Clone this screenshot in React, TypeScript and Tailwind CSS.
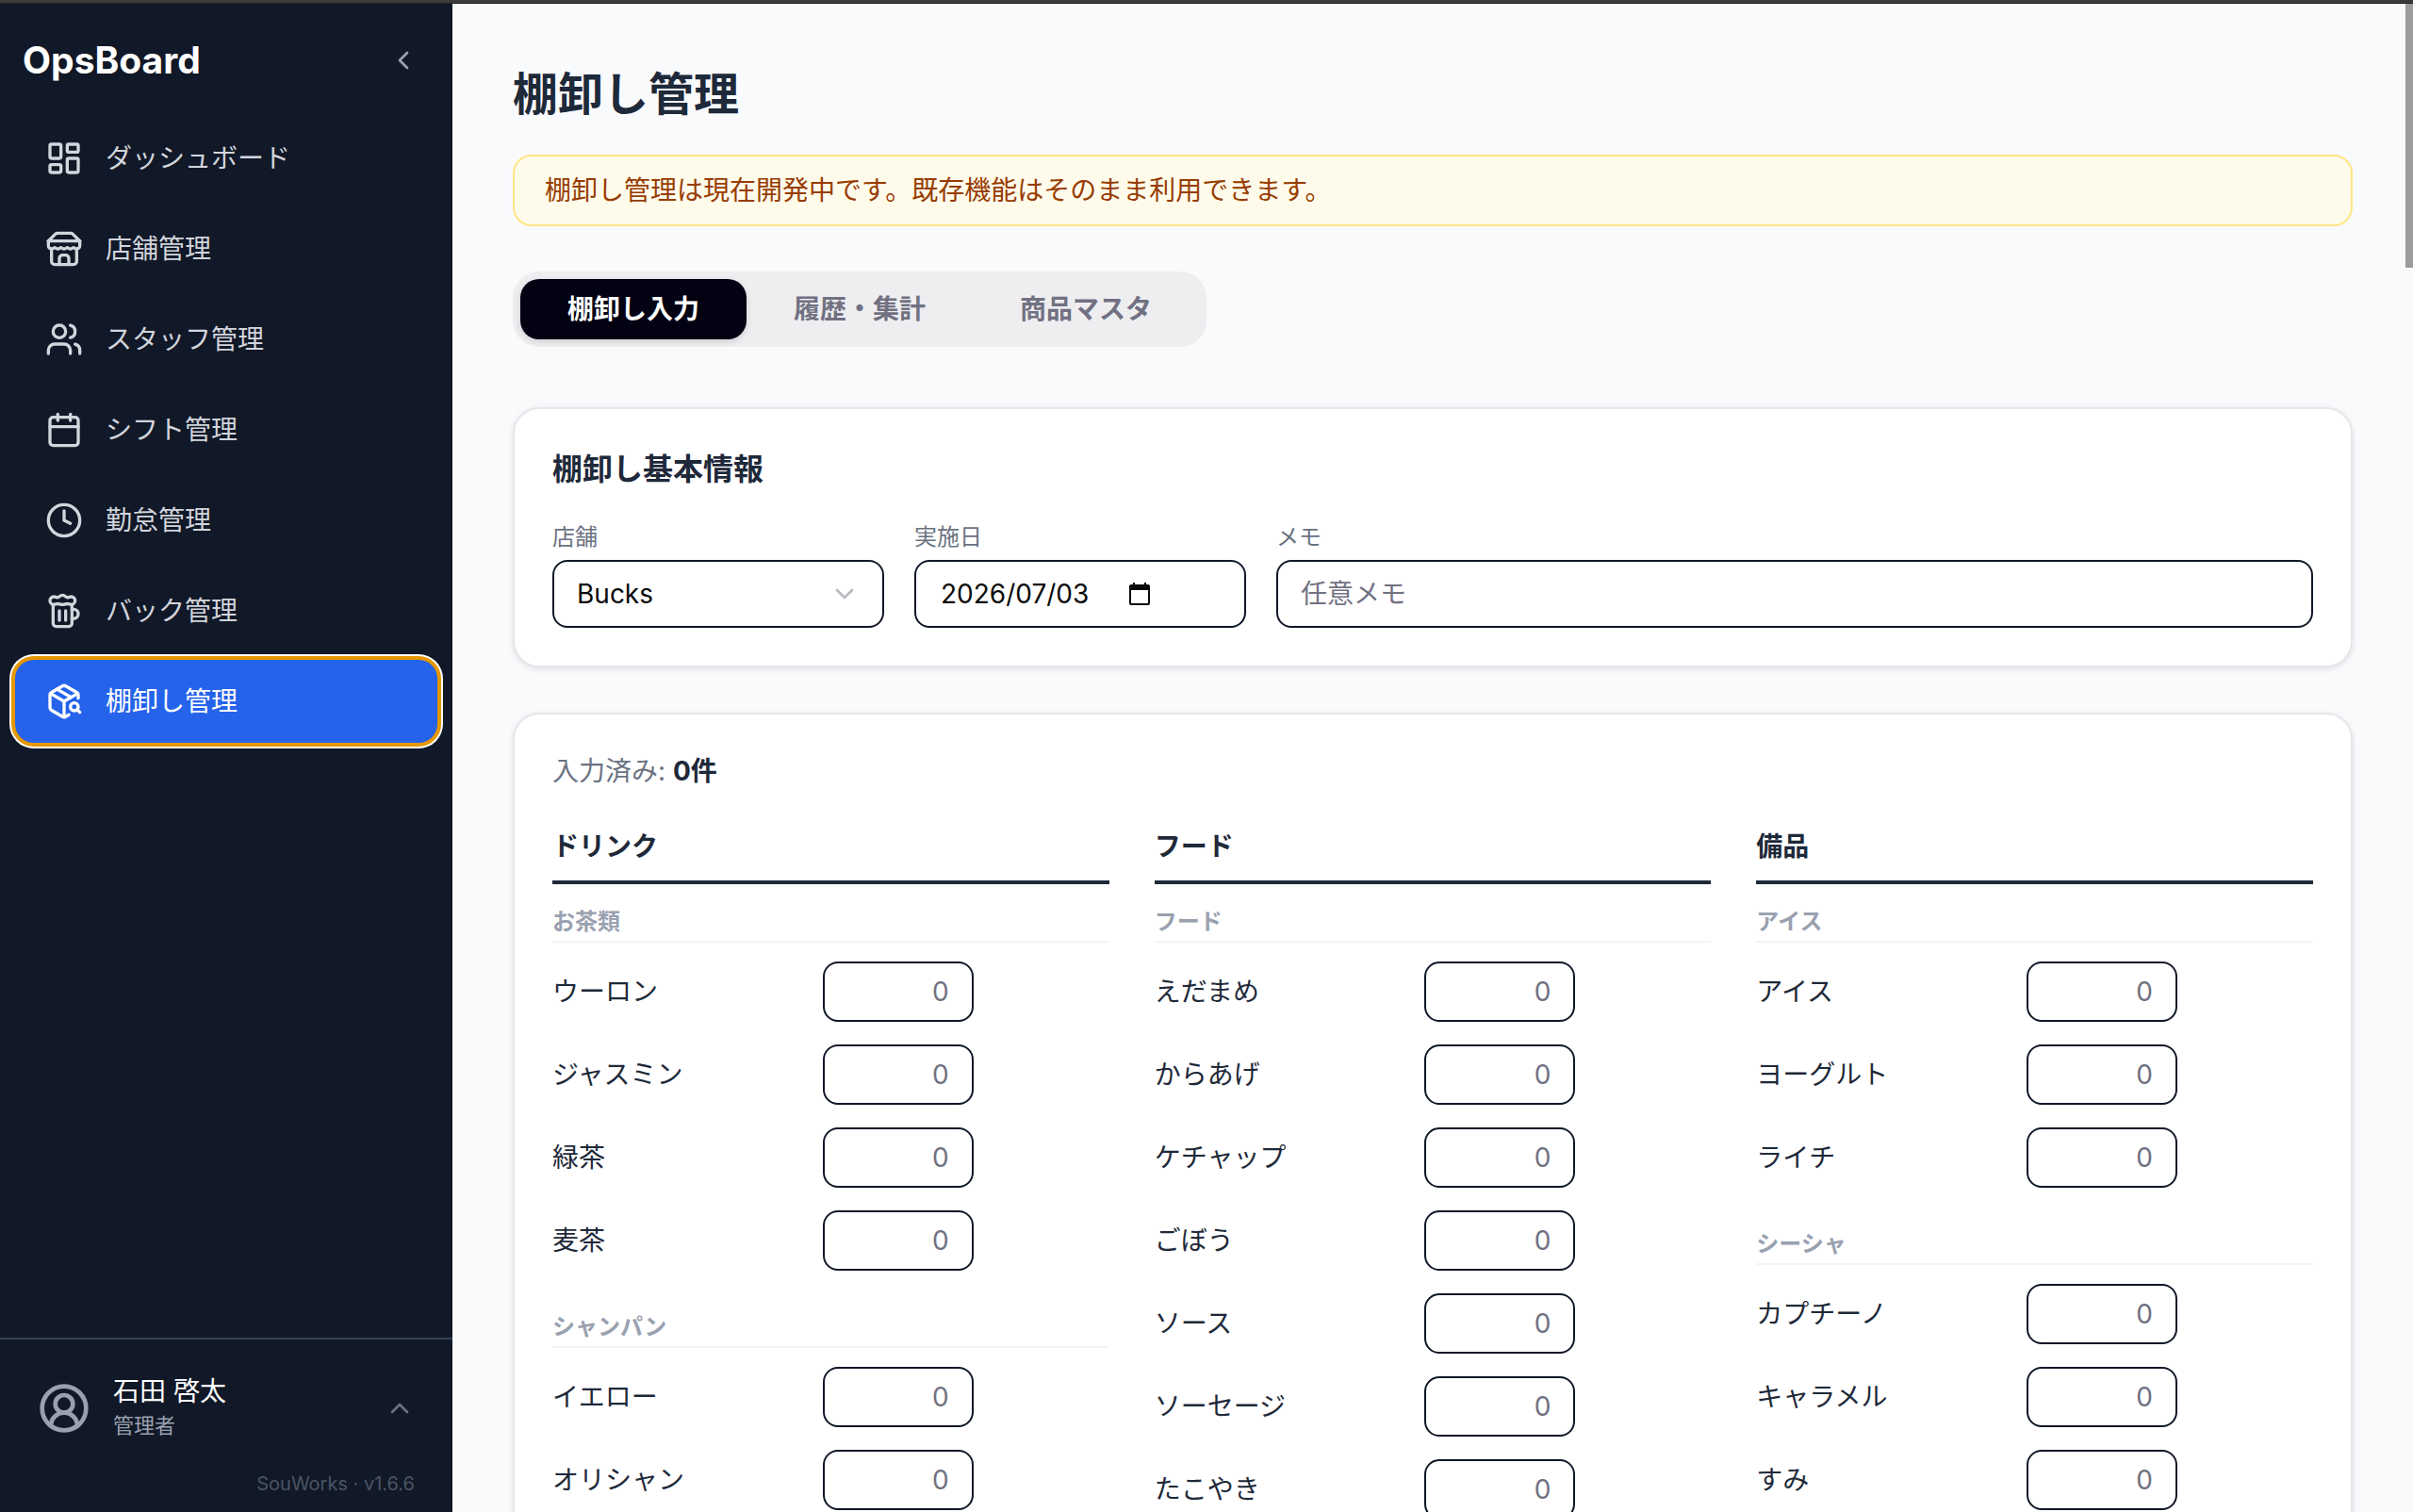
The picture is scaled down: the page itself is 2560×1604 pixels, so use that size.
import { useState } from 'react'
import {
  Beer, Calendar, ChevronDown, ChevronLeft, ChevronUp,
  CircleUserRound, Clock, LayoutDashboard, PackageSearch, Users,
} from 'lucide-react'

type Category = { name: string; items: string[] }
type Group = { name: string; categories: Category[] }

const GROUPS: Group[] = [
  {
    name: 'ドリンク',
    categories: [
      { name: 'お茶類', items: ['ウーロン', 'ジャスミン', '緑茶', '麦茶'] },
      { name: 'シャンパン', items: ['イエロー', 'オリシャン'] },
    ],
  },
  {
    name: 'フード',
    categories: [
      { name: 'フード', items: ['えだまめ', 'からあげ', 'ケチャップ', 'ごぼう', 'ソース', 'ソーセージ', 'たこやき'] },
    ],
  },
  {
    name: '備品',
    categories: [
      { name: 'アイス', items: ['アイス', 'ヨーグルト', 'ライチ'] },
      { name: 'シーシャ', items: ['カプチーノ', 'キャラメル', 'すみ'] },
    ],
  },
]

const TABS = ['棚卸し入力', '履歴・集計', '商品マスタ']

const FIELD = 'h-18 w-full rounded-2xl border-2 border-[#101828] bg-white text-[28px] leading-10 text-[#0a0a0a]'

function StoreIcon({ className }: { className?: string }) {
  return (
    <svg
      viewBox="0 0 24 24"
      className={className}
      fill="none"
      stroke="currentColor"
      strokeWidth="2"
      strokeLinecap="round"
      strokeLinejoin="round"
      aria-hidden="true"
    >
      <path d="m2 7 4.41-4.41A2 2 0 0 1 7.83 2h8.34a2 2 0 0 1 1.42.59L22 7" />
      <path d="M4 12v8a2 2 0 0 0 2 2h12a2 2 0 0 0 2-2v-8" />
      <path d="M15 22v-4a2 2 0 0 0-2-2h-2a2 2 0 0 0-2 2v4" />
      <path d="M2 7h20" />
      <path d="M22 7v3a2 2 0 0 1-2 2a2.7 2.7 0 0 1-1.59-.63.7.7 0 0 0-.82 0A2.7 2.7 0 0 1 16 12a2.7 2.7 0 0 1-1.59-.63.7.7 0 0 0-.82 0A2.7 2.7 0 0 1 12 12a2.7 2.7 0 0 1-1.59-.63.7.7 0 0 0-.82 0A2.7 2.7 0 0 1 8 12a2.7 2.7 0 0 1-1.59-.63.7.7 0 0 0-.82 0A2.7 2.7 0 0 1 4 12a2 2 0 0 1-2-2V7" />
    </svg>
  )
}

const NAV = [
  { label: 'ダッシュボード', icon: LayoutDashboard },
  { label: '店舗管理', icon: StoreIcon },
  { label: 'スタッフ管理', icon: Users },
  { label: 'シフト管理', icon: Calendar },
  { label: '勤怠管理', icon: Clock },
  { label: 'バック管理', icon: Beer },
  { label: '棚卸し管理', icon: PackageSearch },
]

function Sidebar() {
  const current = '棚卸し管理'

  return (
    <aside className="flex w-120 shrink-0 flex-col bg-[#111827]">
      <div className="flex h-30 items-center justify-between pl-6 pr-9">
        <span className="text-[39px] font-bold leading-14 text-white">OpsBoard</span>
        <button type="button" aria-label="メニューを閉じる" className="text-[#99a1af]">
          <ChevronLeft className="size-8" />
        </button>
      </div>

      <nav className="flex flex-1 flex-col gap-2 px-4">
        {NAV.map(({ label, icon: Icon }) => (
          <a
            key={label}
            href="#"
            aria-current={label === current ? 'page' : undefined}
            className={
              'flex h-22 items-center gap-6 rounded-[20px] px-8 text-[28px] leading-10 ' +
              (label === current
                ? 'bg-[#2563eb] text-white shadow-[0_0_0_4px_#e59700,0_0_0_6px_#ffffff]'
                : 'text-[#d1d5dc]')
            }
          >
            <Icon className="size-10 shrink-0" />
            <span>{label}</span>
          </a>
        ))}
      </nav>

      <div className="border-t-2 border-[#364153] px-10 pb-[14px] pt-[35px]">
        <button type="button" className="flex w-full items-center gap-6 text-left">
          <CircleUserRound className="size-14 shrink-0 text-[#99a1af]" />
          <span className="flex flex-1 flex-col pb-1">
            <span className="text-[28px] leading-10 text-white">石田 啓太</span>
            <span className="text-[22px] leading-8 text-[#99a1af]">管理者</span>
          </span>
          <ChevronUp className="size-8 text-[#6a7282]" />
        </button>
        <p className="mt-[26px] text-right text-[20px] leading-8 text-[#4a5565]">SouWorks · v1.6.6</p>
      </div>
    </aside>
  )
}

function BasicInfo() {
  return (
    <section className="mt-16 rounded-[28px] border-2 border-[#e5e7eb] bg-white p-10 shadow-[0_2px_6px_rgba(0,0,0,0.1)]">
      <h2 className="text-[32px] font-bold leading-12 text-[#1e2939]">棚卸し基本情報</h2>
      <div className="mt-8 flex gap-8">
        <div className="w-88">
          <label htmlFor="store" className="block text-[24px] leading-8 text-[#6a7282]">店舗</label>
          <div className="relative mt-2">
            <select id="store" className={FIELD + ' appearance-none px-6'}>
              <option>Bucks</option>
            </select>
            <ChevronDown className="pointer-events-none absolute right-[26px] top-5 size-8 text-[#b8b8c0]" />
          </div>
        </div>
        <div className="w-88">
          <label htmlFor="date" className="block text-[24px] leading-8 text-[#6a7282]">実施日</label>
          <div className={FIELD + ' mt-2 flex items-center pl-[26px]'}>
            <input id="date" type="text" defaultValue="2026/07/03" className="w-48 outline-none" />
            <button type="button" aria-label="カレンダーを開く" className="ml-2">
              <svg viewBox="0 0 22 24" className="h-6 w-[22px]" aria-hidden="true">
                <path
                  fill="#0a0a0a"
                  fillRule="evenodd"
                  d="M4 0h2v2h10V0h2v2h2a2 2 0 0 1 2 2v18a2 2 0 0 1-2 2H2a2 2 0 0 1-2-2V4a2 2 0 0 1 2-2h2ZM2 8v14h18V8Z"
                />
              </svg>
            </button>
          </div>
        </div>
        <div className="flex-1">
          <label htmlFor="memo" className="block text-[24px] leading-8 text-[#6a7282]">メモ</label>
          <input
            id="memo"
            type="text"
            placeholder="任意メモ"
            className={FIELD + ' mt-2 block px-6 placeholder:text-[#717182]'}
          />
        </div>
      </div>
    </section>
  )
}

function ItemRow({ id, name }: { id: string; name: string }) {
  return (
    <div className="flex items-center gap-4 py-3">
      <label htmlFor={id} className="flex-1 text-[28px] leading-10 text-[#1e2939]">{name}</label>
      <input
        id={id}
        type="text"
        inputMode="numeric"
        placeholder="0"
        className="h-16 w-40 rounded-2xl border-2 border-[#101828] bg-white px-6 text-right text-[28px] leading-10 placeholder:text-[#717182]"
      />
      {/* unit column */}
      <span className="w-32" />
    </div>
  )
}

function ItemGroup({ group }: { group: Group }) {
  return (
    <div>
      <h3 className="border-b-4 border-[#1e2939] pb-4 text-[28px] font-bold leading-10 text-[#1e2939]">{group.name}</h3>
      <div className="mt-6 flex flex-col gap-8">
        {group.categories.map(cat => (
          <div key={cat.name}>
            <h4 className="mb-2 border-b-2 border-[#f3f4f6] pb-1 text-[24px] font-bold leading-8 text-[#99a1af]">
              {cat.name}
            </h4>
            {cat.items.map(item => (
              <ItemRow key={item} id={`${group.name}-${cat.name}-${item}`} name={item} />
            ))}
          </div>
        ))}
      </div>
    </div>
  )
}

export default function App() {
  const [tab, setTab] = useState(TABS[0])

  return (
    <div className="flex h-screen flex-col overflow-hidden bg-[#f9fafc] font-['Inter','Noto_Sans_CJK_JP',sans-serif]">
      <div className="h-1 shrink-0 border-b border-[#232323] bg-[#3a3a3a]" />
      <div className="flex min-h-0 flex-1">
        <Sidebar />

        <main className="relative min-w-0 flex-1 overflow-hidden p-16">
          <h1 className="text-[48px] font-bold leading-16 text-[#1e2939]">棚卸し管理</h1>
          <p className="mt-8 rounded-[20px] border-2 border-[#fee685] bg-[#fffbeb] px-8 py-4 text-[28px] leading-10 text-[#973c00]">
            棚卸し管理は現在開発中です。既存機能はそのまま利用できます。
          </p>

          <div role="tablist" className="mt-12 flex w-fit rounded-[28px] bg-[#eeeef1] p-2">
            {TABS.map(t => (
              <button
                key={t}
                type="button"
                role="tab"
                aria-selected={t === tab}
                onClick={() => setTab(t)}
                className={
                  'h-16 w-60 rounded-[20px] text-[28px] font-bold leading-10 ' +
                  (t === tab ? 'bg-[#030213] text-white shadow-[0_2px_6px_rgba(0,0,0,0.15)]' : 'text-[#717182]')
                }
              >
                {t}
              </button>
            ))}
          </div>

          <BasicInfo />

          <section className="mt-12 rounded-[28px] border-2 border-[#e5e7eb] bg-white p-10 shadow-[0_2px_6px_rgba(0,0,0,0.1)]">
            <p className="text-[28px] leading-10 text-[#6a7282]">
              入力済み: <span className="font-bold text-[#1e2939]">0件</span>
            </p>
            <div className="mt-10 grid grid-cols-3 gap-12">
              {GROUPS.map(g => (
                <ItemGroup key={g.name} group={g} />
              ))}
            </div>
          </section>

          {/* scroll thumb */}
          <div className="absolute right-0 top-0 h-70 w-2 bg-[#9c9c9c]" />
        </main>
      </div>
    </div>
  )
}
